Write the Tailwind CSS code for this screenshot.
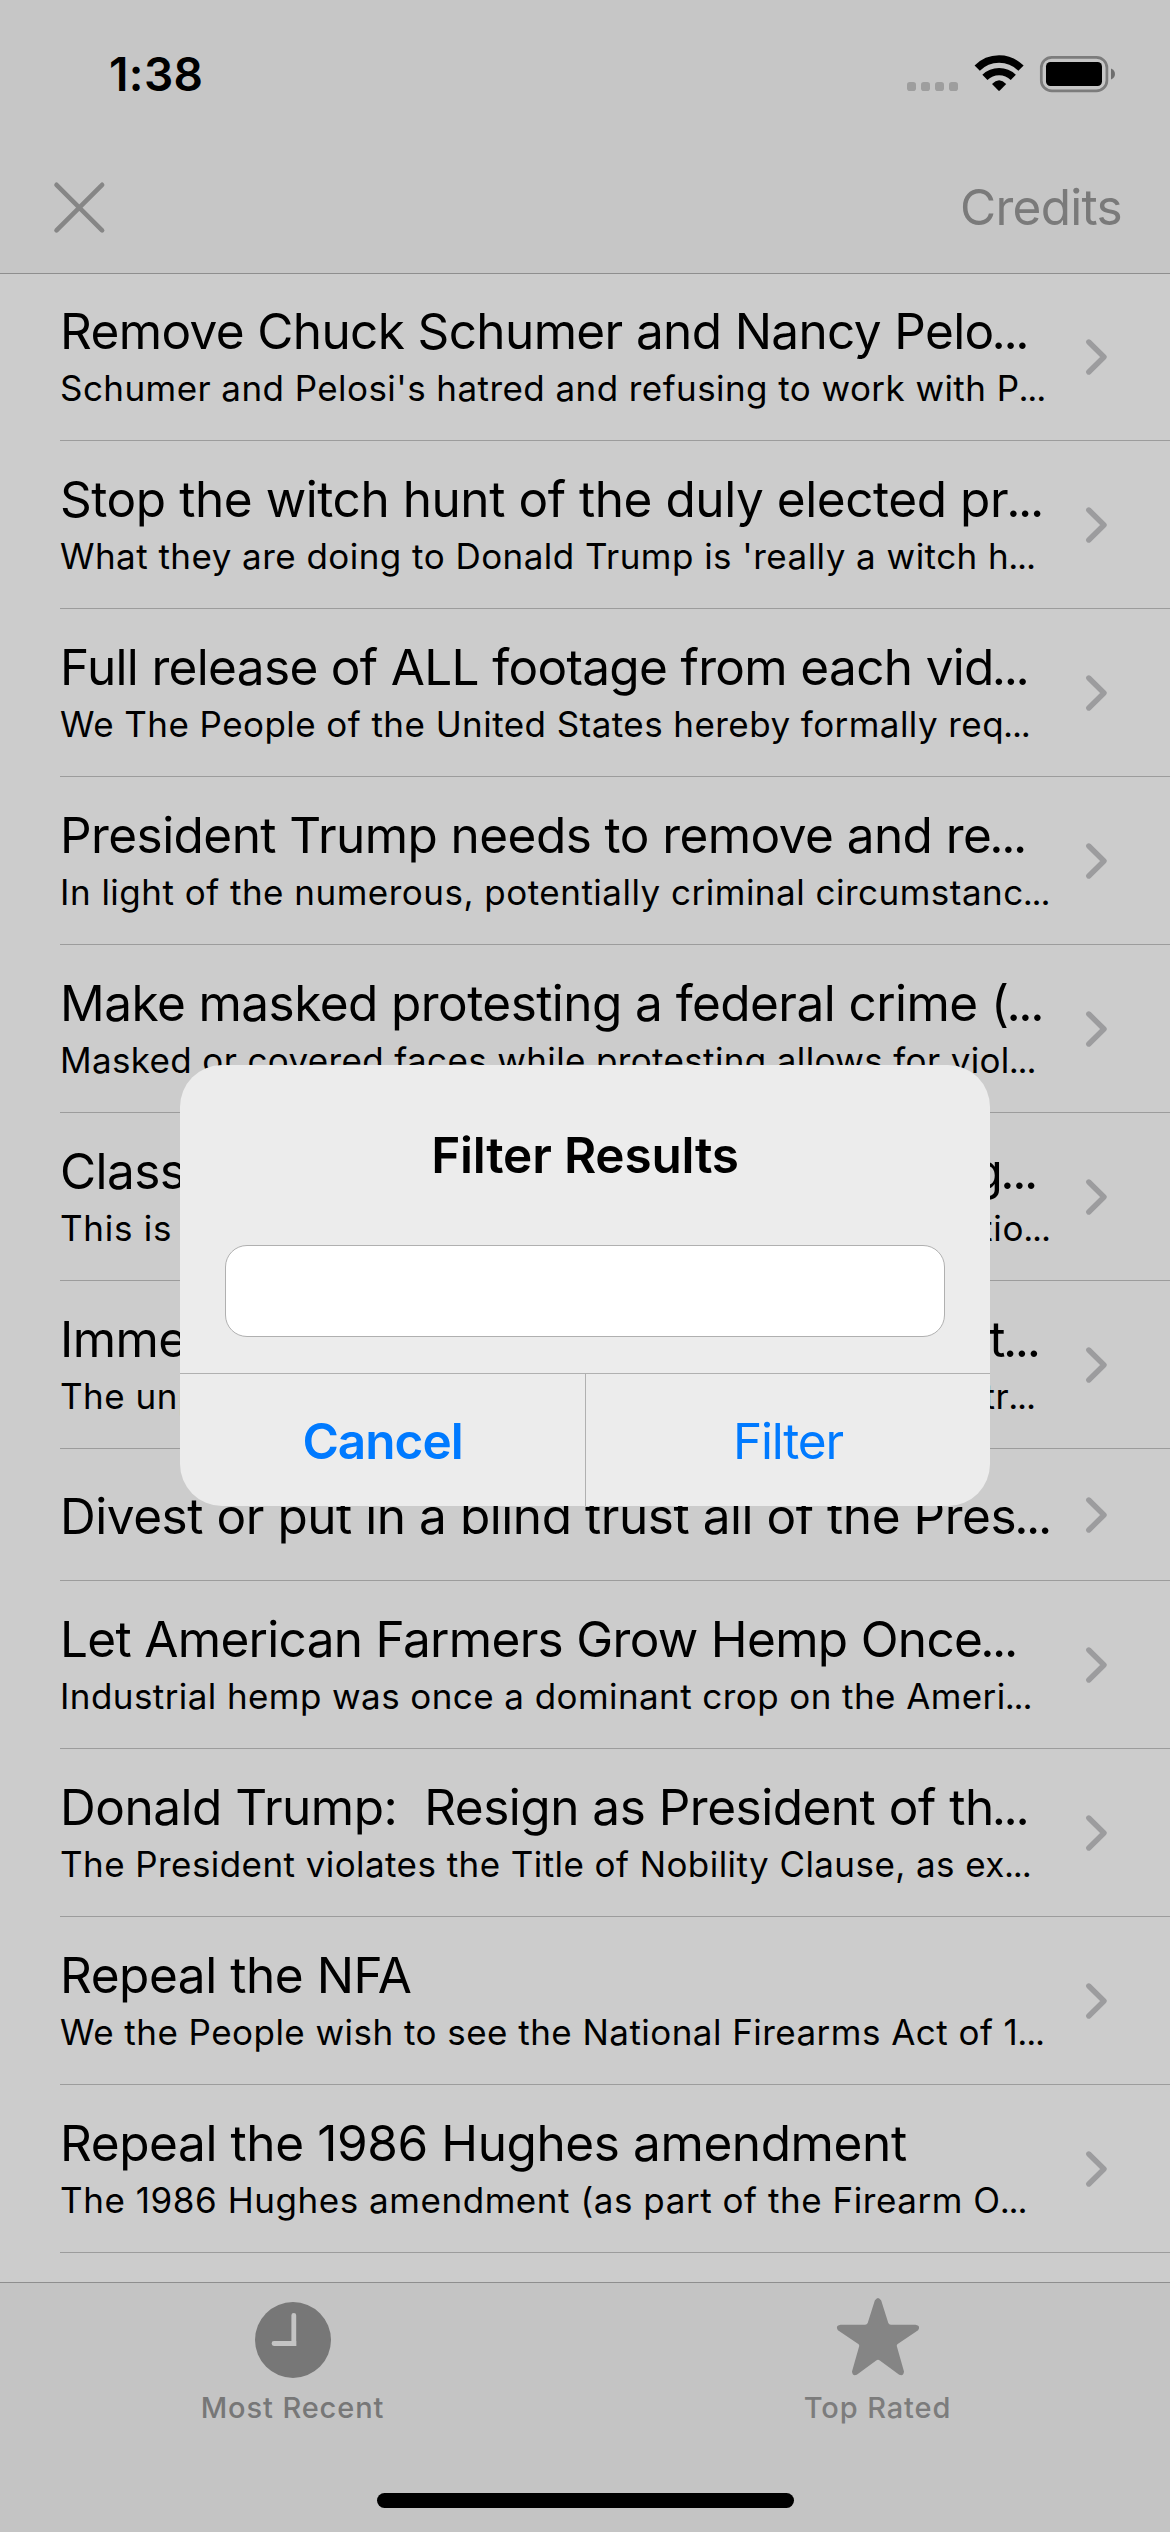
<!DOCTYPE html>
<html lang="en">
<head>
<meta charset="utf-8">
<title>Petitions</title>
<script src="https://cdn.jsdelivr.net/npm/@tailwindcss/browser@4"></script>
</head>
<body class="w-[1170px] h-[2532px] overflow-hidden bg-[#cccccc] text-black font-[Inter,sans-serif]">
<div class="relative flex flex-col w-[1170px] h-[2532px] overflow-hidden whitespace-nowrap">

  <header class="h-[274px] shrink-0 flex flex-col bg-[#c6c6c6] border-b border-[#8e8e8e]">
    <div class="h-[132px] shrink-0 flex justify-between pl-[109px] pr-[54px]">
      <span class="pt-[44px] text-[46px] leading-[60px] font-semibold tracking-[0.4px]">1:38</span>
      <svg class="mt-[52px]" width="210" height="42" viewBox="906 52 210 42" fill="none">
        <g fill="#9e9e9e"><rect x="907" y="82" width="9" height="9" rx="2.8"/><rect x="921" y="82" width="9" height="9" rx="2.8"/><rect x="935" y="82" width="9" height="9" rx="2.8"/><rect x="949" y="82" width="9" height="9" rx="2.8"/></g>
        <g stroke="#000" stroke-width="7.400">
          <path d="M977.200 68.200A30.700 30.700 0 0 1 1021 68.200"/>
          <path d="M984.900 77.300A20.500 20.500 0 0 1 1013.300 77.300"/>
        </g>
        <path d="M992 84Q999.100 76.600 1006.200 84L999.600 90.800H998.600Z" fill="#000"/>
        <rect x="1041.300" y="57.300" width="65.600" height="33.600" rx="10.500" stroke="#7c7c7c" stroke-width="2.700"/>
        <rect x="1046" y="62" width="56" height="24" rx="4.500" fill="#000"/>
        <path d="M1111 68.500v11c5.300-2 5.300-9 0-11z" fill="#6e6e6e"/>
      </svg>
    </div>
    <div class="flex-1 flex justify-between pl-[52px] pr-[48px]">
      <svg class="mt-[48px]" width="56" height="56" viewBox="52 180 56 56" fill="none" stroke="#868686" stroke-width="4.600" stroke-linecap="round"><path d="M56.500 184.800l45.600 45.600M102.100 184.800L56.500 230.400"/></svg>
      <span class="pt-[45px] text-[49.5px] leading-[60px] tracking-[-0.7px] text-[#7a7a7a]">Credits</span>
    </div>
  </header>

  <ul id="list" class="-mt-px flex-1 min-h-0 overflow-hidden flex flex-col"></ul>

  <nav class="h-[250px] shrink-0 border-t border-[#8e8e8e] bg-[#c4c4c4] flex flex-col items-center">
    <div class="w-full h-[210px] grid grid-cols-2">
      <div class="flex flex-col items-center pt-[13px] text-[#777777]">
        <svg width="84" height="84" viewBox="250 2296 84 84"><circle cx="292" cy="2340" r="38" fill="#777777"/><path d="M292.800 2315.300V2343.500H273" fill="none" stroke="#c4c4c4" stroke-width="4.800" stroke-linecap="round"/><path d="M291 2341h4.200v5H291z" fill="#c4c4c4"/></svg>
        <span class="pt-[10px] text-[29px] leading-[36px] font-medium tracking-[0.9px]">Most Recent</span>
      </div>
      <div class="flex flex-col items-center pt-[13px] text-[#7c7c7c]">
        <svg width="84" height="84" viewBox="835 2296 84 84"><path fill="#858585" d="M873.800 2300.500q3.200-5 6.400 0L887.300 2323q.7 1.800 2.600 1.800H914.500q5.500 1 2.600 5.400L896.700 2344q-1.300 1-.8 2.600L903 2371.500q-.4 5-4.800 3.200L878.800 2360.500q-1.800-1.300-3.600 0L855.800 2374.700q-4.400 1.800-4.800-3.200L858.100 2346.600q.5-1.600-.8-2.600L836.900 2330.200q-2.900-4.400 2.600-5.400H864.100q1.900 0 2.600-1.800z"/></svg>
        <span class="pt-[10px] text-[29px] leading-[36px] font-medium tracking-[0.9px]">Top Rated</span>
      </div>
    </div>
    <div class="w-[417px] h-[15px] rounded-full bg-black"></div>
  </nav>

  <div role="dialog" class="absolute left-[180px] top-[1065px] w-[810px] h-[441px] rounded-[42px] overflow-hidden bg-[#ececec] flex flex-col">
    <h2 class="pt-[60px] text-center text-[49.5px] leading-[60px] font-semibold tracking-[-0.2px]">Filter Results</h2>
    <div class="mx-[45px] mt-[60px] h-[92px] rounded-[22px] border border-[#b0b0b0] bg-white"></div>
    <div class="mt-auto h-[133px] border-t border-[#b0b0b0] flex text-[49.5px] leading-[60px] text-center text-[#007aff]">
      <button class="w-[406px] border-r border-[#b0b0b0] pt-px font-semibold tracking-[-1px]">Cancel</button>
      <button class="flex-1 pt-px tracking-[-1.2px]">Filter</button>
    </div>
  </div>
</div>
<script>
// title, title tracking, subtitle, subtitle tracking
const rows = [
  ["Remove Chuck Schumer and Nancy Pelo...", -0.63, "Schumer and Pelosi's hatred and refusing to work with P...", 0.43],
  ["Stop the witch hunt of the duly elected pr...", -0.44, "What they are doing to Donald Trump is 'really a witch h...", 0.46],
  ["Full release of ALL footage from each vid...", -0.66, "We The People of the United States hereby formally req...", 0.44],
  ["President Trump needs to remove and re...", -0.56, "In light of the numerous, potentially criminal circumstanc...", 0.49],
  ["Make masked protesting a federal crime (...", -0.56, "Masked or covered faces while protesting allows for viol...", 0.36],
  ["Classify Antifa as a domestic terrorist org...", -0.56, "This is to now recognize Antifa as a terrorist organizatio...", 0.75],
  ["Immediately release Donald Trump's full t...", -0.55, "The unprecedented economic conflicts of this administr...", 0.48],
  ["Divest or put in a blind trust all of the Pres...", -0.45, "", 0],
  ["Let American Farmers Grow Hemp Once...", -0.68, "Industrial hemp was once a dominant crop on the Ameri...", 0.42],
  ["Donald Trump:\u00a0 Resign as President of th...", -0.49, "The President violates the Title of Nobility Clause, as ex...", 0.43],
  ["Repeal the NFA", -0.45, "We the People wish to see the National Firearms Act of 1...", 0.46],
  ["Repeal the 1986 Hughes amendment", -0.4, "The 1986 Hughes amendment (as part of the Firearm O...", 0.55]
];
const dots = (t, cls) => t.replace("...", `<span class="${cls}">...</span>`);
document.getElementById("list").innerHTML = rows.map(([t, ts, s, ss]) => `
  <li class="relative shrink-0 ml-[60px] ${s ? "h-[168px] pt-[28px]" : "h-[132px] pt-[37px]"} border-b border-[#9c9c9c]">
    <div class="text-[49.5px] leading-[60px]"><span style="letter-spacing:${ts}px">${dots(t, "-ml-[2px] tracking-[-2.4px]")}</span></div>
    ${s ? `<div class="text-[35px] leading-[54px]"><span style="letter-spacing:${ss}px">${dots(s, "-ml-[1px] tracking-[-1.2px]")}</span></div>` : ""}
    <svg class="absolute right-[60px] top-1/2 -mt-[20px]" width="27" height="40" viewBox="0 0 27 40" fill="none" stroke="#9c9c9e" stroke-width="5.400" stroke-linecap="round" stroke-linejoin="round"><path d="M5.800 5L21 20 5.800 35"/></svg>
  </li>`).join("");
</script>
</body>
</html>
